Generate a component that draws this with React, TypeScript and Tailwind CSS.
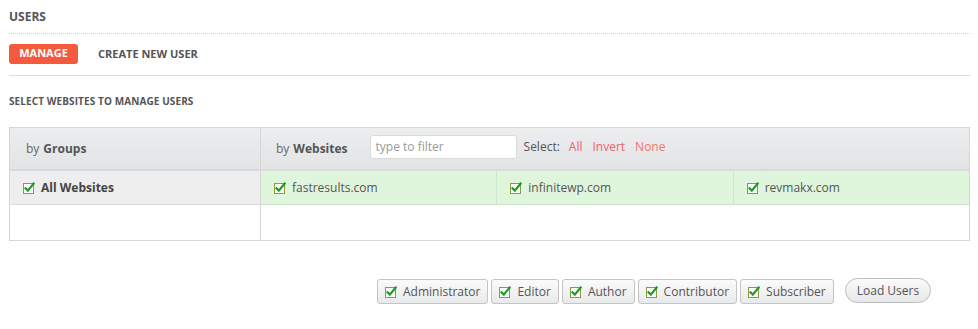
import React from 'react'

function CheckIcon() {
  return (
    <svg width="12" height="12" viewBox="0 0 12 12" className="flex-shrink-0">
      <rect x="0.5" y="1.5" width="10" height="10" fill="#fff" stroke="#8c9c3c" />
      <path d="M2.5 6.2 L4.8 8.6 L10.6 1.6" fill="none" stroke="#1f9b27" strokeWidth="2.2" strokeLinecap="square" />
    </svg>
  )
}

const sites = ['fastresults.com', 'infinitewp.com', 'revmakx.com']
const roles = ['Administrator', 'Editor', 'Author', 'Contributor', 'Subscriber']

export default function App() {
  return (
    <div className="w-[978px] h-[329px] bg-white text-[#555] px-[9px] pr-[8px]" style={{ fontFamily: '"Open Sans", sans-serif' }}>
      <div className="pt-[9px] pb-[8px] border-b border-dotted border-[#cfcfcf] text-[12px] font-bold leading-[16px]">USERS</div>

      <div className="flex items-center h-[42px] border-b border-[#dddddd]">
        <div className="bg-[#f55a3f] text-white text-[11px] font-bold rounded-[3px] w-[69px] h-[20px] flex items-center justify-center mt-[-2px]">MANAGE</div>
        <div className="ml-[20px] mt-[-1px] text-[11px] font-bold text-[#555]">CREATE NEW USER</div>
      </div>

      <div className="mt-[18px] text-[10px] font-bold leading-[14px] tracking-[0.1px]">SELECT WEBSITES TO MANAGE USERS</div>

      <div className="mt-[19px] border border-[#d6d6d6] flex h-[114px]">
        <div className="w-[251px] border-r border-[#d6d6d6] flex flex-col">
          <div className="h-[43px] border-b-2 border-[#d8dadc] bg-gradient-to-b from-[#ecedef] to-[#e2e4e6] flex items-center pl-[16px] text-[12px]">
            <span className="text-[#666]">by</span>
            <span className="ml-[4px] font-bold text-[#555]">Groups</span>
          </div>
          <div className="h-[34px] bg-[#eeeeee] border-b border-[#dcdcdc] flex items-center gap-[6px] pl-[13px] text-[12px] font-bold text-[#444]">
            <CheckIcon />
            <span>All Websites</span>
          </div>
        </div>
        <div className="flex-1 flex flex-col">
          <div className="h-[43px] border-b-2 border-[#d8dadc] bg-gradient-to-b from-[#ecedef] to-[#e2e4e6] flex items-center pl-[15px] text-[12px]">
            <span className="text-[#666]">by</span>
            <span className="ml-[4px] font-bold text-[#555]">Websites</span>
            <div className="ml-[22px] mt-[-3px] w-[147px] h-[24px] bg-white border border-[#d9d9d9] rounded-[3px] flex items-center pl-[5px] text-[12px] text-[#999]">type to filter</div>
            <span className="ml-[7px] mt-[-4px] text-[#555]">Select:</span>
            <span className="ml-[9px] mt-[-4px] text-[#f2606a]">All</span>
            <span className="ml-[10px] mt-[-4px] text-[#f2606a]">Invert</span>
            <span className="ml-[10px] mt-[-4px] text-[#f2766a]">None</span>
          </div>
          <div className="flex h-[34px] bg-[#dff5dc] border-b border-[#cfe5cc]">
            {sites.map((s, i) => (
              <div key={s} className={`flex-1 flex items-center gap-[6px] pl-[13px] text-[12px] text-[#555] ${i < 2 ? 'border-r border-[#cfe5cc]' : ''}`}>
                <CheckIcon />
                <span>{s}</span>
              </div>
            ))}
          </div>
        </div>
      </div>

      <div className="flex items-center mt-[38px] pl-[368px]">
        {roles.map((r) => (
          <div key={r} className="mr-[3px] h-[25px] px-[7px] flex items-center gap-[6px] border border-[#c4c4c4] rounded-[3px] bg-gradient-to-b from-[#fbfbfb] to-[#e8e9ea] text-[12px] text-[#555]">
            <CheckIcon />
            <span>{r}</span>
          </div>
        ))}
        <div className="ml-[8px] mt-[-2px] h-[25px] px-[11px] flex items-center border border-[#bdbdbd] rounded-full bg-gradient-to-b from-[#fbfbfb] to-[#e6e7e8] text-[12px] text-[#555]">Load Users</div>
      </div>
    </div>
  )
}
